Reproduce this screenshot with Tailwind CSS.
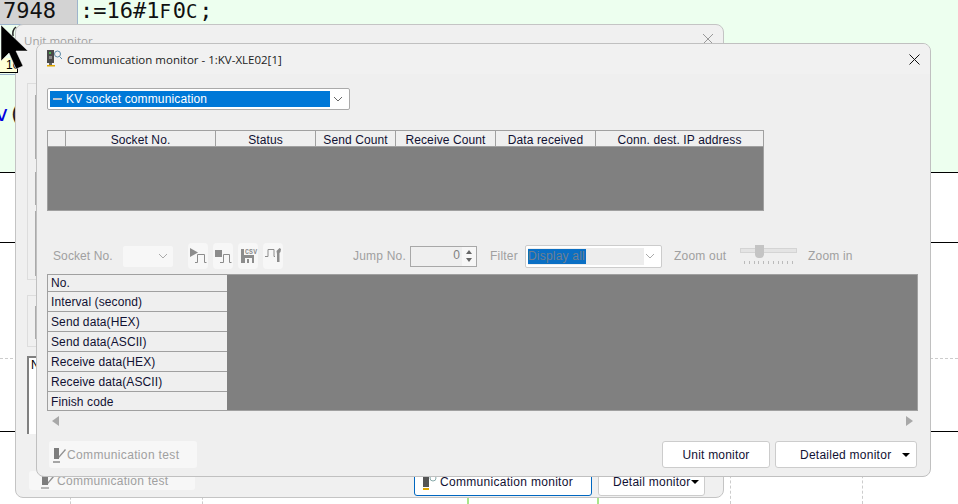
<!doctype html>
<html><head><meta charset="utf-8"><script src="https://cdn.jsdelivr.net/npm/@tailwindcss/browser@4"></script></head>
<body class="m-0">
<div class="relative w-[958px] h-[504px] overflow-hidden bg-white font-['Liberation_Sans',sans-serif] text-[12px] tracking-[0.1px] text-black">
  <!-- editor background -->
  <div class="absolute inset-x-0 top-0 h-[172px] bg-[#edffef] border-b border-black box-content"></div>
  <div class="absolute inset-x-0 top-[242px] h-px bg-black"></div>
  <div class="absolute inset-x-0 top-[358px] border-t border-dashed border-[#cccccc]"></div>
  <div class="absolute inset-x-0 top-[431px] h-px bg-black"></div>
  <div class="absolute top-[497px] left-[70px] h-[7px] border-l border-dashed border-[#cccccc]"></div>
  <div class="absolute top-[497px] left-[202px] h-[7px] border-l border-dashed border-[#cccccc]"></div>
  <div class="absolute top-[465px] left-[730px] h-[39px] border-l border-dashed border-[#cccccc]"></div>
  <div class="absolute top-[465px] left-[862px] h-[39px] border-l border-dashed border-[#cccccc]"></div>
  <div class="absolute top-[497px] left-[467px] h-[7px] w-[2px] bg-[#a8e68a]"></div>
  <div class="absolute top-[497px] left-[597px] h-[7px] w-[2px] bg-[#a8e68a]"></div>
  <div class="absolute left-0 top-0 flex font-['DejaVu_Sans_Mono',monospace] text-[22px] tracking-normal leading-[22px] text-[#111111]">
    <div class="w-[78px] h-[25px] bg-[#d3d3d3] border-r border-b border-[#9db4cc] pl-[3px]">7948</div>
    <div class="pl-[2px]">:=16#1<span class="text-[19px] tracking-[1.8px]">F</span>0<span class="text-[19px] tracking-[1.8px]">C</span>;</div>
  </div>
  <div class="absolute left-0 top-[74px] w-[20px] h-px bg-[#9db4cc]"></div>
  <div class="absolute left-[-5px] top-[102px] font-['DejaVu_Sans_Mono',monospace] text-[22px] tracking-normal leading-[24px]"><span class="text-[#0000e0]">v</span><span class="text-[#222222]">(</span></div>

  <!-- Unit monitor window -->
  <div class="absolute left-[15px] top-[24px] w-[709px] h-[474px] bg-[#f0f0f0] border border-[#c4c4c4] rounded-[8px] overflow-hidden">
    <div class="flex items-center justify-between h-[30px] pl-[8px] pr-[9px] text-[#a0a0a0] text-[11.5px] tracking-normal"><span class="mt-[1px] font-['Open_Sans',sans-serif]">Unit monitor</span>
      <svg class="w-[12px] h-[12px] mb-[2px]" viewBox="0 0 12 12"><path d="M1 1 11 11M11 1 1 11" stroke="#999999" fill="none"/></svg></div>
    <div class="ml-[11px] mt-[28px] w-[40px] h-[197px] border-l border-t border-b border-[#dddddd] pl-[7px] pt-[11px] flex flex-col">
      <div class="w-[4px] h-[64px] border-l border-t border-b border-[#aaaaaa] flex flex-col justify-around"><i class="h-px bg-[#aaaaaa]"></i><i class="h-px bg-[#aaaaaa]"></i><i class="h-px bg-[#aaaaaa]"></i></div>
      <div class="w-[4px] h-[33px] mt-[13px] border-l border-t border-b border-[#aaaaaa] flex flex-col justify-around"><i class="h-px bg-[#aaaaaa]"></i></div>
      <div class="w-[4px] h-[65px] mt-[6px] border-l border-t border-b border-[#aaaaaa] flex flex-col justify-around"><i class="h-px bg-[#aaaaaa]"></i><i class="h-px bg-[#aaaaaa]"></i><i class="h-px bg-[#aaaaaa]"></i></div>
    </div>
    <div class="ml-[11px] mt-[15px] w-[40px] h-[52px] border-l border-t border-b border-[#dddddd] pl-[7px] pt-[10px]">
      <div class="w-[4px] h-[33px] border-l border-t border-b border-[#aaaaaa] flex flex-col justify-around"><i class="h-px bg-[#aaaaaa]"></i></div>
    </div>
    <div class="ml-[11px] mt-[9px] w-[40px] h-[78px] bg-white border-l-2 border-t-2 border-[#808080] pl-[2px] leading-[14px]">N</div>
    <div class="flex mt-[33px] pl-[13px] pr-[18px] h-[29px]">
      <div class="w-[166px] h-[19px] mt-[4px] bg-[#f7f7f7] rounded-[3px] flex items-center pl-[12px] gap-[1px] text-[#a0a0a0] tracking-[0.3px]">
        <svg class="w-[15px] h-[16px] shrink-0" viewBox="0 0 15 16"><path d="M1 1h6v11H1z" fill="#7d7d7d"/><path d="M7 9l5-6 1 1-6 7z" fill="#909090"/><path d="M0 15h8" stroke="#777"/></svg><span>Communication test</span></div>
      <div class="ml-auto w-[178px] h-[29px] border border-[#0067c0] rounded-[3px] bg-white flex items-center pl-[6px] gap-[2px] tracking-[0.3px] text-[#111133]">
        <svg class="w-[17px] h-[16px] shrink-0" viewBox="0 0 17 16"><path d="M2 1h6v12H2z" fill="#555"/><path d="M2 14h6v2H2z" fill="#e0a800"/><circle cx="12" cy="4" r="3" fill="none" stroke="#8aa"/></svg><span>Communication monitor</span></div>
      <div class="ml-[6px] w-[107px] h-[29px] border border-[#cccccc] rounded-[3px] bg-white flex items-center justify-between pl-[14px] pr-[5px] text-[#111133] tracking-[0.25px]"><span>Detail monitor</span><i class="border-x-[4px] border-t-[4px] border-x-transparent border-t-black"></i></div>
    </div>
  </div>

  <!-- Communication monitor dialog -->
  <div class="absolute left-[36px] top-[43px] w-[895px] h-[434px] bg-[#efefef] border border-[#c0c0c0] rounded-[8px] flex flex-col overflow-hidden">
    <div class="h-[30px] shrink-0 bg-[#f1f1f1] flex items-center pl-[9px] pr-[10px]">
      <svg class="w-[16px] h-[18px] shrink-0 -mt-[2px]" viewBox="0 0 16 18"><path d="M1 1h7v13H1z" fill="#4a4a4a"/><path d="M3 3h2v2H3z" fill="#4caf50"/><path d="M3 7h3v3H3z" fill="#8a8a8a"/><path d="M3 14h3v2H3z" fill="#666"/><path d="M1 16h8v1.500H1z" fill="#e0a800"/><circle cx="11.500" cy="5" r="3" fill="none" stroke="#5b8aa8"/><path d="M13.500 7.500 16 10" stroke="#5b8aa8"/></svg>
      <span class="ml-[5px] mt-[1px] font-['Open_Sans',sans-serif] text-[11.5px] tracking-normal text-[#222222]">Communication monitor - 1:KV-XLE02[1]</span>
      <svg class="ml-auto w-[11px] h-[11px]" viewBox="0 0 11 11"><path d="M.5.5l10 10M10.500.5l-10 10" stroke="#111111" fill="none"/></svg>
    </div>
    <div class="pl-[10px] flex flex-col">
      <!-- top select -->
      <div class="mt-[14px] w-[303px] h-[22px] bg-white border border-[#aaaaaa] rounded-[2px] flex items-center pl-[2px] pr-[6px]">
        <div class="w-[280px] h-[16px] bg-[#0078d7] text-white flex items-center pl-[3px] gap-[4px] tracking-[0.13px]"><i class="w-[9px] h-[2px] bg-[#b8c4d0]"></i><span>KV socket communication</span></div>
        <svg class="ml-auto w-[10px] h-[6px]" viewBox="0 0 10 6"><path d="M1 1l4 4 4-4" stroke="#666666" fill="none"/></svg>
      </div>
      <!-- socket table -->
      <div class="mt-[20px] w-[717px] h-[81px] border border-[#a0a0a0] flex flex-col">
        <div class="h-[15px] flex border-b border-[#a0a0a0] box-content text-center leading-[18px] text-[#111133]">
          <div class="w-[18px] border-r border-[#a0a0a0]"></div>
          <div class="w-[150px] border-r border-[#a0a0a0]">Socket No.</div>
          <div class="w-[100px] border-r border-[#a0a0a0]">Status</div>
          <div class="w-[80px] border-r border-[#a0a0a0]">Send Count</div>
          <div class="w-[100px] border-r border-[#a0a0a0]">Receive Count</div>
          <div class="w-[100px] border-r border-[#a0a0a0]">Data received</div>
          <div class="flex-1">Conn. dest. IP address</div>
        </div>
        <div class="flex-1 bg-[#808080]"></div>
      </div>
      <!-- toolbar -->
      <div class="mt-[32px] h-[26px] flex items-center text-[#a0a0a0] tracking-[0.2px]">
        <span class="ml-[6px] w-[70px] tracking-[0.1px]">Socket No.</span>
        <div class="w-[50px] h-[21px] bg-[#f7f7f7] rounded-[2px] flex items-center justify-end pr-[5px]"><svg class="w-[10px] h-[6px]" viewBox="0 0 10 6"><path d="M1 1l4 4 4-4" stroke="#aaaaaa" fill="none"/></svg></div>
        <div class="ml-[15px] flex gap-[5px]">
          <div class="w-[20px] h-[26px] bg-[#f7f7f7] rounded-[4px]"><svg class="w-[20px] h-[26px]" viewBox="0 0 20 26"><path d="M2 5l8 4.500-8 4.500z" fill="#8c8c8c"/><path d="M7 19.500h2.500V11.500h7v8h2" stroke="#8c8c8c" fill="none"/></svg></div>
          <div class="w-[20px] h-[26px] bg-[#f7f7f7] rounded-[4px]"><svg class="w-[20px] h-[26px]" viewBox="0 0 20 26"><path d="M2 7h7v7H2z" fill="#8c8c8c"/><path d="M7 19.500h3.500V11.500h6v8h2" stroke="#8c8c8c" fill="none"/></svg></div>
          <div class="w-[20px] h-[26px] bg-[#f7f7f7] rounded-[4px]"><svg class="w-[20px] h-[26px]" viewBox="0 0 20 26"><path d="M3 6h3v6h10v8H3z" fill="#8c8c8c"/><path d="M7 15h7v5H7z" fill="#f7f7f7"/><path d="M9 16h2v4H9z" fill="#8c8c8c"/><text x="7" y="10.500" font-size="6.500" font-family="Liberation Mono" font-weight="700" fill="#8c8c8c">CSV</text></svg></div>
          <div class="w-[20px] h-[26px] bg-[#f7f7f7] rounded-[4px]"><svg class="w-[20px] h-[26px]" viewBox="0 0 20 26"><path d="M2 13.500h3V6.500h6v7h1" stroke="#8c8c8c" fill="none"/><path d="M13.500 8l3-3 1.500 1-.5 3-1 1v9h-2.500V11z" fill="#8c8c8c"/></svg></div>
        </div>
        <span class="ml-[70px] w-[57px]">Jump No.</span>
        <div class="w-[67px] h-[21px] border border-[#a8a8a8] flex items-center justify-end">
          <span class="mr-[2px] -mt-[3px] text-[#808080]">0</span>
          <div class="w-[14px] h-full flex flex-col gap-px bg-[#f7f7f7] items-center justify-center">
            <i class="border-x-[3px] border-b-[4px] border-x-transparent border-b-[#666666] mb-[3px]"></i>
            <i class="border-x-[3px] border-t-[4px] border-x-transparent border-t-[#666666]"></i>
          </div>
        </div>
        <span class="ml-[13px] w-[35px]">Filter</span>
        <div class="w-[137px] h-[23px] bg-white border border-[#cccccc] rounded-[2px] flex items-center p-[2px] pr-[6px]">
          <div class="w-[116px] h-[17px] bg-[#ededed] pt-px"><div class="w-[58px] h-[15px] bg-[#0a6fc4] text-[#6f7f90] leading-[15px]">Display all</div></div>
          <svg class="ml-auto w-[10px] h-[6px]" viewBox="0 0 10 6"><path d="M1 1l4 4 4-4" stroke="#aaaaaa" fill="none"/></svg>
        </div>
        <span class="ml-[12px] w-[66px]">Zoom out</span>
        <div class="w-[57px] h-[22px] relative">
          <div class="absolute left-0 right-0 top-[3px] h-[5px] bg-[#e4e4e4] border border-[#d4d4d4]"></div>
          <div class="absolute left-[15px] top-0 w-[9px] h-[13px] bg-[#c4c4c4] rounded-b-[4px]"></div>
          <div class="absolute left-[4px] right-[4px] top-[16px] h-[3px] flex justify-between"><i class="w-px bg-[#bbbbbb]"></i><i class="w-px bg-[#bbbbbb]"></i><i class="w-px bg-[#bbbbbb]"></i><i class="w-px bg-[#bbbbbb]"></i><i class="w-px bg-[#bbbbbb]"></i><i class="w-px bg-[#bbbbbb]"></i><i class="w-px bg-[#bbbbbb]"></i><i class="w-px bg-[#bbbbbb]"></i><i class="w-px bg-[#bbbbbb]"></i><i class="w-px bg-[#bbbbbb]"></i><i class="w-px bg-[#bbbbbb]"></i></div>
        </div>
        <span class="ml-[11px]">Zoom in</span>
      </div>
      <!-- data table -->
      <div class="mt-[5px] w-[871px] h-[137px] border border-[#a0a0a0] flex bg-[#808080]">
        <div class="w-[179px] bg-[#efefef] flex flex-col text-[#111133] leading-[20px]">
          <div class="h-[16px] px-[3px] leading-[17px]">No.</div>
          <div class="h-[20px] px-[3px] border-t border-[#a0a0a0]">Interval (second)</div>
          <div class="h-[20px] px-[3px] border-t border-[#a0a0a0]">Send data(HEX)</div>
          <div class="h-[20px] px-[3px] border-t border-[#a0a0a0]">Send data(ASCII)</div>
          <div class="h-[20px] px-[3px] border-t border-[#a0a0a0]">Receive data(HEX)</div>
          <div class="h-[20px] px-[3px] border-t border-[#a0a0a0]">Receive data(ASCII)</div>
          <div class="h-[20px] px-[3px] border-t border-[#a0a0a0]">Finish code</div>
        </div>
      </div>
    </div>
    <!-- scroll arrows -->
    <div class="pl-[15px] pr-[17px] h-[19px] flex items-center justify-between">
      <i class="border-y-[5px] border-r-[7px] border-y-transparent border-r-[#a8a8a8]"></i>
      <i class="border-y-[5px] border-l-[7px] border-y-transparent border-l-[#a8a8a8]"></i>
    </div>
    <!-- footer buttons -->
    <div class="mt-[11px] pl-[12px] pr-[13px] flex items-center">
      <div class="w-[148px] h-[27px] bg-[#f7f7f7] rounded-[3px] flex items-center pl-[3px] text-[#a0a0a0] tracking-[0.35px]">
        <svg class="w-[15px] h-[16px] shrink-0" viewBox="0 0 15 16"><path d="M2 1h5v11H2z" fill="#7d7d7d"/><path d="M7 9l6-7 1 1-7 8z" fill="#909090"/><path d="M1 15h7" stroke="#555"/></svg><span>Communication test</span></div>
      <div class="ml-auto w-[108px] h-[27px] bg-white border border-[#cccccc] rounded-[3px] flex items-center justify-center text-[#111133] tracking-[0.2px]">Unit monitor</div>
      <div class="ml-[5px] w-[142px] h-[27px] bg-white border border-[#cccccc] rounded-[3px] flex items-center pl-[24px] pr-[6px] justify-between text-[#111133] tracking-[0.25px]"><span>Detailed monitor</span><i class="border-x-[4px] border-t-[4px] border-x-transparent border-t-black"></i></div>
    </div>
  </div>

  <!-- tooltip + cursor -->
  <div class="absolute left-0 top-[58px] w-[18px] h-[15px] bg-[#ffffd8] border-b border-r border-black leading-[15px] pl-[6px] tracking-normal">10</div>
  <svg class="absolute left-[10px] top-[26px] w-[8px] h-[11px]" viewBox="0 0 8 11"><path d="M6 1Q2 4 3 10" stroke="#222222" stroke-width="1.500" fill="none"/></svg>
  <svg class="absolute left-0 top-[24px] w-[30px] h-[46px]" viewBox="0 0 30 46"><path d="M1 1v36l8-8 7 16 7-3-7-15h12z" fill="#000000" stroke="#ffffff" stroke-width=".5"/></svg>
</div>
</body></html>
